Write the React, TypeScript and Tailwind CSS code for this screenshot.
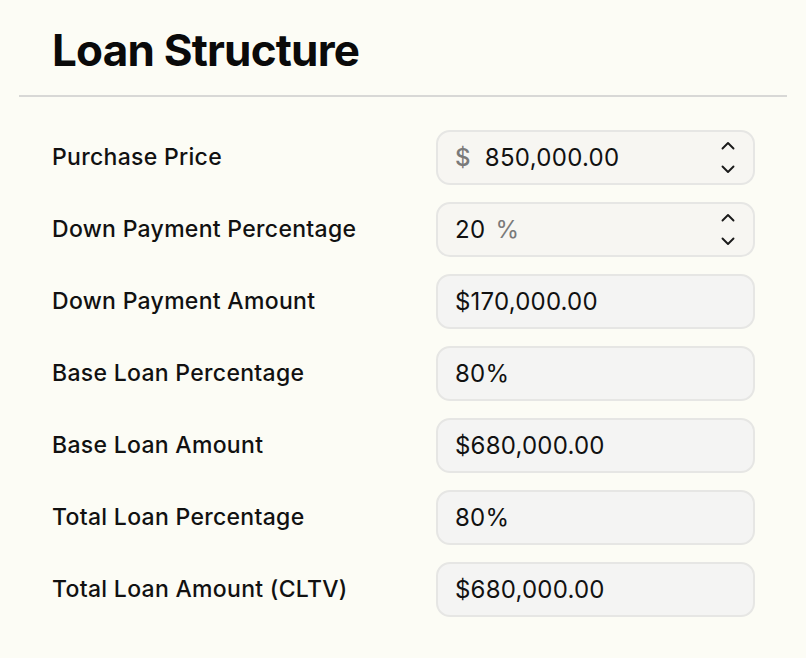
import React from 'react';

const ChevronUp = () => (
  <svg width="14" height="9" viewBox="0 0 14 9" fill="none">
    <path d="M1.5 7.5 7 2l5.5 5.5" stroke="#1a1a1a" strokeWidth="1.9" strokeLinecap="round" strokeLinejoin="round" />
  </svg>
);

const ChevronDown = () => (
  <svg width="14" height="9" viewBox="0 0 14 9" fill="none">
    <path d="M1.5 1.5 7 7l5.5-5.5" stroke="#1a1a1a" strokeWidth="1.9" strokeLinecap="round" strokeLinejoin="round" />
  </svg>
);

const Stepper = () => (
  <div className="flex flex-col items-center gap-[15px] ml-auto mr-[18px]">
    <ChevronUp />
    <ChevronDown />
  </div>
);

interface RowProps {
  label: string;
  children: React.ReactNode;
}

const Row: React.FC<RowProps> = ({ label, children }) => (
  <div className="flex items-center">
    <span className="w-[384px] text-[23px] font-medium text-[#111111] tracking-[0.3px]">
      {label}
    </span>
    {children}
  </div>
);

const ReadOnly = ({ value }: { value: string }) => (
  <div className="flex items-center w-[319px] h-[55px] rounded-[14px] border-2 border-[#e6e6e4] bg-[#f4f4f3] pl-[17px] text-[24px] tracking-[0.2px] text-[#111111]">
    {value}
  </div>
);

export default function App() {
  return (
    <div
      className="min-h-[658px] bg-[#fcfcf5] pt-[22px]"
      style={{ fontFamily: 'Inter, "Noto Sans", sans-serif' }}
    >
      <h1 className="pl-[52px] text-[44px] font-bold tracking-[-0.8px] text-[#0a0a0a] leading-[56px]">
        Loan Structure
      </h1>
      <hr className="mx-[19px] mt-[17px] border-t-2 border-[#d8d8d6]" />

      <div className="flex flex-col gap-[17px] pl-[52px] pt-[33px]">
        <Row label="Purchase Price">
          <div className="flex items-center w-[319px] h-[55px] rounded-[14px] border-2 border-[#e6e6e4] bg-[#f7f6f2] pl-[17px] text-[24px] tracking-[0.3px] text-[#111111]">
            <span className="text-[#7a7a7a] font-medium mr-[14px]">$</span>
            <span>850,000.00</span>
            <Stepper />
          </div>
        </Row>
        <Row label="Down Payment Percentage">
          <div className="flex items-center w-[319px] h-[55px] rounded-[14px] border-2 border-[#e6e6e4] bg-[#f7f6f2] pl-[17px] text-[24px] tracking-[0.3px] text-[#111111]">
            <span>20</span>
            <span className="text-[#7a7a7a] ml-[10px]">%</span>
            <Stepper />
          </div>
        </Row>
        <Row label="Down Payment Amount">
          <ReadOnly value="$170,000.00" />
        </Row>
        <Row label="Base Loan Percentage">
          <ReadOnly value="80%" />
        </Row>
        <Row label="Base Loan Amount">
          <ReadOnly value="$680,000.00" />
        </Row>
        <Row label="Total Loan Percentage">
          <ReadOnly value="80%" />
        </Row>
        <Row label="Total Loan Amount (CLTV)">
          <ReadOnly value="$680,000.00" />
        </Row>
      </div>
    </div>
  );
}
